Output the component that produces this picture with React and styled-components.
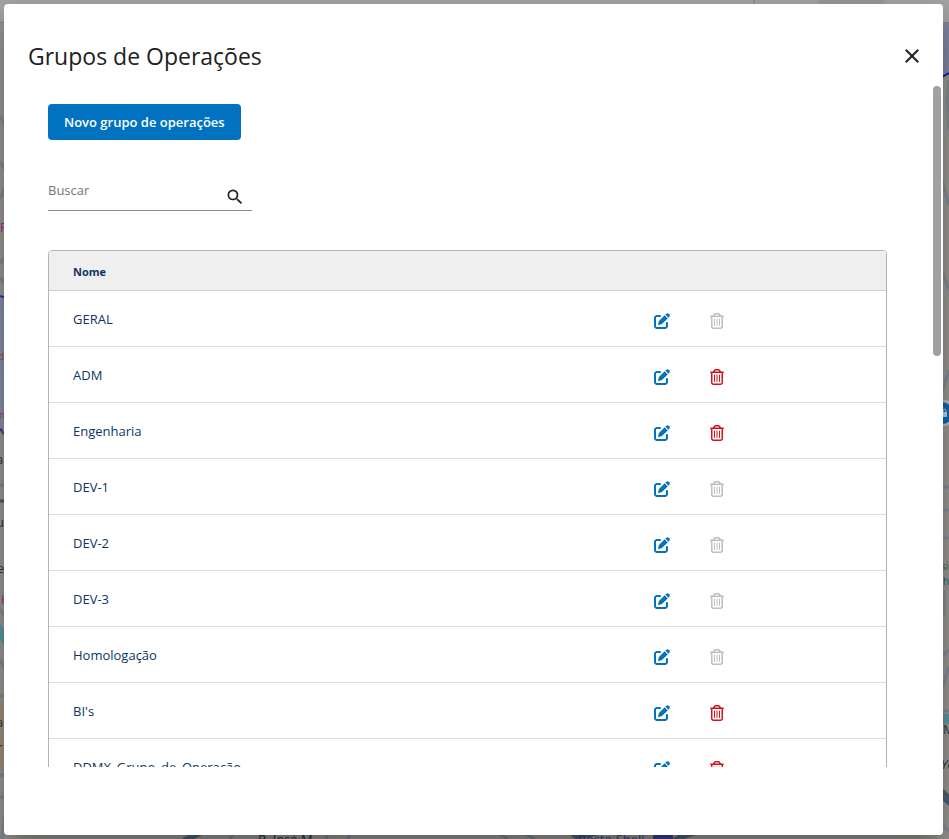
import React, { useState } from 'react';
import styled, { createGlobalStyle } from 'styled-components';
import { FaPenToSquare, FaRegTrashCan } from 'react-icons/fa6';
import { MdClose, MdSearch } from 'react-icons/md';

const GlobalStyle = createGlobalStyle`
  * {
    box-sizing: border-box;
  }

  body {
    margin: 0;
    font-family: 'Open Sans', 'Noto Sans', sans-serif;
    color: #212121;
    background-color: #8d8c8a;
  }

  button,
  input {
    font: inherit;
  }
`;

const Page = styled.div`
  position: relative;
  height: 100vh;
  padding: 4px 6px 4px 4px;
  overflow: hidden;
`;

const MapSvg = styled.svg`
  position: absolute;
  inset: 0;
  width: 100%;
  height: 100%;
  font-size: 13px;
`;

const Dialog = styled.section`
  position: relative;
  display: flex;
  flex-direction: column;
  height: 100%;
  border-radius: 4px;
  background-color: white;
  box-shadow: 0 11px 15px -7px rgba(0, 0, 0, 0.2),
    0 24px 38px 3px rgba(0, 0, 0, 0.14), 0 9px 46px 8px rgba(0, 0, 0, 0.12);
`;

const DialogHeader = styled.header`
  display: flex;
  justify-content: space-between;
  align-items: center;
  flex: none;
  height: 82px;
  padding: 22px 19px 0 24px;
`;

const Title = styled.h1`
  margin: 0;
  font-size: 23px;
  line-height: 32px;
  font-weight: 400;
`;

const IconButton = styled.button`
  display: flex;
  padding: 0;
  border: none;
  background: none;
  color: ${(p) => p.$color || '#212121'};
  cursor: pointer;

  &:disabled {
    color: #bdbdbd;
    cursor: default;
  }
`;

const DialogBody = styled.div`
  flex: 1;
  min-height: 0;
  margin-bottom: 68px;
  padding: 18px 56px 0 44px;
  overflow: hidden;
`;

const ScrollThumb = styled.div`
  position: absolute;
  top: 82px;
  right: 2px;
  width: 8px;
  height: 270px;
  border-radius: 4px;
  background-color: #a0a0a0;
`;

const PrimaryButton = styled.button`
  display: block;
  height: 36px;
  padding: 0 16px;
  border: none;
  border-radius: 4px;
  background-color: #0072bf;
  color: white;
  font-size: 13px;
  font-weight: 600;
  cursor: pointer;
`;

const SearchField = styled.form`
  display: flex;
  align-items: center;
  width: 204px;
  height: 39px;
  margin: 32px 0 39px;
  padding-right: 7px;
  border-bottom: 1px solid #8c8c8c;
`;

const SearchInput = styled.input`
  flex: 1;
  min-width: 0;
  height: 38px;
  padding: 0 0 2px;
  border: none;
  outline: none;
  background: none;
  font-size: 13px;

  &::placeholder {
    color: #757575;
    opacity: 1;
  }
`;

const SearchButton = styled(IconButton)`
  padding-top: 12px;
  stroke: currentColor;
`;

const TableFrame = styled.div`
  border: 1px solid #b4b4b4;
  border-radius: 4px;
  overflow: hidden;
`;

const Table = styled.table`
  width: 100%;
  table-layout: fixed;
  border-collapse: separate;
  border-spacing: 0;
  color: #0b3663;
  text-align: left;
`;

const HeadCell = styled.th`
  width: ${(p) => p.$width};
  height: 40px;
  padding: 2px 0 0 24px;
  border-bottom: 1px solid #d0d0d0;
  background-color: #efefef;
  font-size: 11px;
  font-weight: 700;
`;

const NameCell = styled.td`
  height: 56px;
  padding: 0 0 0 24px;
  border-bottom: 1px solid #dcdcdc;
  font-size: 13px;
`;

const ActionsCell = styled.td`
  padding: 4px 0 0 2px;
  border-bottom: 1px solid #dcdcdc;
`;

const Actions = styled.div`
  display: flex;
  align-items: center;
  gap: 39px;
`;

const groups = [
  { name: 'GERAL', removable: false },
  { name: 'ADM', removable: true },
  { name: 'Engenharia', removable: true },
  { name: 'DEV-1', removable: false },
  { name: 'DEV-2', removable: false },
  { name: 'DEV-3', removable: false },
  { name: 'Homologação', removable: false },
  { name: "BI's", removable: true },
  { name: 'DDMX_Grupo_de_Operação', removable: true },
];

const MapBackdrop = () => (
  <MapSvg viewBox="0 0 949 839" preserveAspectRatio="none" aria-hidden="true">
    <rect width="949" height="839" fill="#9b9996" />
    <rect width="949" height="22" fill="#a6a6a6" />
    <rect x="819" width="65" height="22" fill="#9c9c9c" />
    <path d="M754 0V22M0 22.500H949" stroke="#868686" fill="none" />
    {/* left edge */}
    <path d="M0 296L6 299V435L0 429Z" fill="#8a90ac" />
    <path d="M0 296L6 298M0 429L6 436" stroke="#2438b8" strokeWidth="2" />
    <g stroke="#848b92" strokeWidth="4" fill="none">
      <path d="M0 117Q6 122 6 132M0 162L6 170M0 198L6 188M0 264L6 256M0 278L6 284M0 485H6M0 610L6 616M0 660L6 670M0 696H6M0 775H6M0 797H6M2 839L6 810" />
    </g>
    <rect y="699" width="6" height="72" fill="#a0937d" />
    <path d="M0 624L6 632V648L0 640Z" fill="#5e98a6" />
    <path d="M0 501H6" stroke="#515b63" strokeWidth="3" />
    <g fill="#303848">
      <text x="-4" y="464">a</text>
      <text x="-4" y="527">u</text>
      <text x="-3" y="573">e</text>
      <text x="-4" y="727">a</text>
      <text x="-3" y="752">r</text>
    </g>
    <g fill="#9b4f3c" fontSize="10">
      <text x="-2" y="360">d</text>
      <text x="-1" y="419">n</text>
      <text x="1" y="434">u</text>
    </g>
    <g fill="#ab2a8b">
      <text x="0" y="232">F</text>
      <text x="1" y="604">H</text>
    </g>
    {/* right edge */}
    <path d="M942 23H949V73L942 77Z" fill="#8587a6" />
    <path d="M942 77L949 73" stroke="#101cab" strokeWidth="2" />
    <g stroke="#858c98" strokeWidth="3" fill="none">
      <path d="M949 80Q946 100 949 130M942 180L949 205M942 270L949 290M942 392L949 370M942 487H949M942 510H949M942 538H949M942 656L949 650M942 689L949 667M942 711H949M944 590V617M942 825L949 831" />
    </g>
    <circle cx="944" cy="413" r="13" fill="#bfc1c6" />
    <circle cx="942" cy="413" r="11" fill="#0f69b0" />
    <path d="M943 412V410A2 2 0 0 1 946 410V412" stroke="#c9ced4" fill="none" />
    <rect x="942" y="412" width="5" height="5" fill="#c9ced4" />
    <rect x="942" y="714" width="7" height="10" fill="#5e98a6" />
    <path d="M942 788L949 794V806L942 800Z" fill="#4f6077" />
    <g fill="#1f6a54" fontSize="10">
      <text x="941" y="570">si</text>
      <text x="943" y="585">h</text>
    </g>
    <g fill="#303848">
      <text x="943" y="734">M</text>
      <text x="941" y="769" fontStyle="italic">Yo</text>
    </g>
    {/* bottom edge */}
    <path d="M182 839L188 835H202L194 839ZM570 835H600L580 839H575ZM672 839L678 835H696L684 839Z" fill="#4c6377" />
    <path d="M230 839L233 834M326 839L328 834M348 839L350 834M500 834L508 839M526 834L534 839" stroke="#7d8791" strokeWidth="3" />
    <text x="258" y="844" fill="#232b38">R. José M.</text>
    <text x="578" y="844" fill="#3e4388">Posto Shell</text>
    <rect x="653" y="834" width="20" height="5" fill="#3b4195" />
  </MapSvg>
);

const GroupRow = ({ group }) => (
  <tr>
    <NameCell>{group.name}</NameCell>
    <ActionsCell>
      <Actions>
        <IconButton $color="#0072bf" aria-label={`Editar ${group.name}`}>
          <FaPenToSquare size={16} />
        </IconButton>
        <IconButton
          $color="#d4111e"
          disabled={!group.removable}
          aria-label={`Excluir ${group.name}`}
        >
          <FaRegTrashCan size={16} />
        </IconButton>
      </Actions>
    </ActionsCell>
  </tr>
);

const App = () => {
  const [search, setSearch] = useState('');
  const visible = groups.filter((g) =>
    g.name.toLowerCase().includes(search.toLowerCase())
  );

  return (
    <Page>
      <GlobalStyle />
      <MapBackdrop />
      <Dialog role="dialog" aria-labelledby="dialog-title">
        <DialogHeader>
          <Title id="dialog-title">Grupos de Operações</Title>
          <IconButton aria-label="Fechar">
            <MdClose size={24} />
          </IconButton>
        </DialogHeader>
        <DialogBody>
          <PrimaryButton>Novo grupo de operações</PrimaryButton>
          <SearchField onSubmit={(e) => e.preventDefault()}>
            <SearchInput
              aria-label="Buscar"
              placeholder="Buscar"
              value={search}
              onChange={(e) => setSearch(e.target.value)}
            />
            <SearchButton aria-label="Pesquisar">
              <MdSearch size={20} />
            </SearchButton>
          </SearchField>
          <TableFrame>
            <Table>
              <thead>
                <tr>
                  <HeadCell $width="72%">Nome</HeadCell>
                  <HeadCell $width="28%" aria-label="Ações" />
                </tr>
              </thead>
              <tbody>
                {visible.map((g) => (
                  <GroupRow key={g.name} group={g} />
                ))}
              </tbody>
            </Table>
          </TableFrame>
        </DialogBody>
        <ScrollThumb />
      </Dialog>
    </Page>
  );
};

export default App;
